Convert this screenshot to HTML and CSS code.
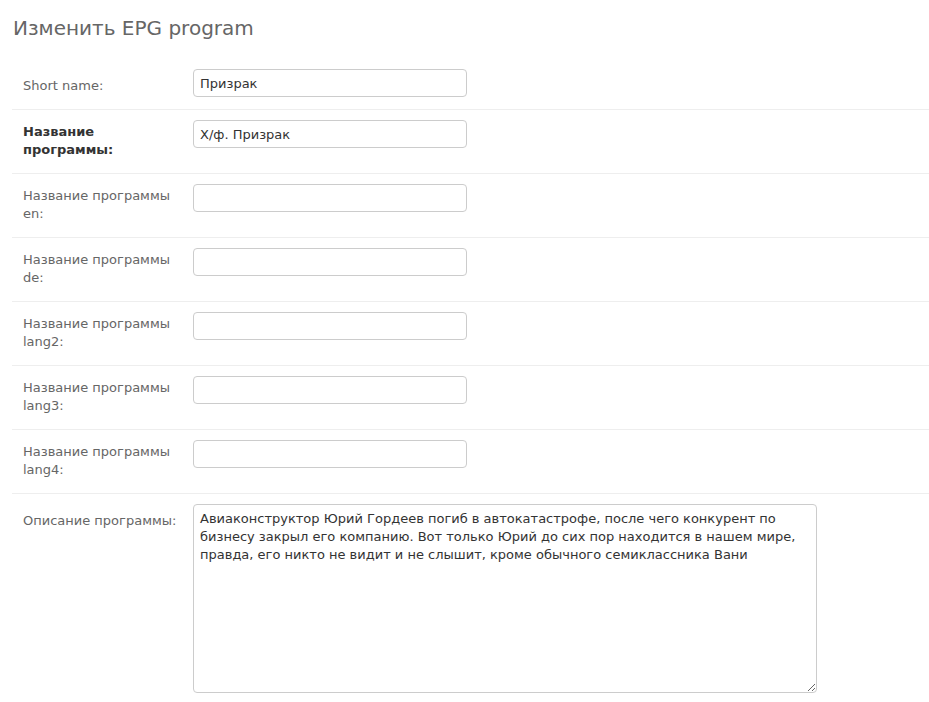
FILE: index.html
```html
<!DOCTYPE html>
<html lang="ru">
<head>
  <meta charset="UTF-8">
  <meta name="viewport" content="width=device-width, initial-scale=1.0">
  <title>Изменить EPG program</title>
  <link rel="stylesheet" href="styles.css">
</head>
<body>
  <div class="content">
    <h1>Изменить EPG program</h1>

    <form class="change-form">
      <div class="form-row row-single">
        <label for="id_short_name">Short name:</label>
        <input type="text" id="id_short_name" value="Призрак">
      </div>

      <div class="form-row">
        <label class="required" for="id_name">Название программы:</label>
        <input type="text" id="id_name" value="Х/ф. Призрак">
      </div>

      <div class="form-row">
        <label for="id_name_en">Название программы en:</label>
        <input type="text" id="id_name_en">
      </div>

      <div class="form-row">
        <label for="id_name_de">Название программы de:</label>
        <input type="text" id="id_name_de">
      </div>

      <div class="form-row">
        <label for="id_name_lang2">Название программы lang2:</label>
        <input type="text" id="id_name_lang2">
      </div>

      <div class="form-row">
        <label for="id_name_lang3">Название программы lang3:</label>
        <input type="text" id="id_name_lang3">
      </div>

      <div class="form-row">
        <label for="id_name_lang4">Название программы lang4:</label>
        <input type="text" id="id_name_lang4">
      </div>

      <div class="form-row row-text">
        <label for="id_description">Описание программы:</label>
        <textarea id="id_description">Авиаконструктор Юрий Гордеев погиб в автокатастрофе, после чего конкурент по бизнесу закрыл его компанию. Вот только Юрий до сих пор находится в нашем мире, правда, его никто не видит и не слышит, кроме обычного семиклассника Вани</textarea>
      </div>
    </form>
  </div>
</body>
</html>
```

FILE: styles.css
```css
body {
  margin: 0;
  font-family: "DejaVu Sans", Verdana, sans-serif;
  font-size: 13px;
  color: #333;
  background: #fff;
}
.content {
  padding: 0 0 0 12px;
}
h1 {
  margin: 0;
  padding: 15px 0 0 1px;
  height: 44px;
  font-size: 20px;
  font-weight: normal;
  line-height: 26px;
  color: #666;
}
.form-row {
  display: flex;
  align-items: flex-start;
  padding: 10px 0 10px 11px;
  border-bottom: 1px solid #eee;
}
.form-row label {
  flex: 0 0 170px;
  box-sizing: border-box;
  min-height: 43px;
  padding: 3px 10px 4px 0;
  line-height: 18px;
  color: #666;
}
.form-row label.required {
  font-weight: bold;
  color: #333;
}
.row-single label {
  min-height: 30px;
  padding: 8px 10px 0 0;
}
.row-text {
  border-bottom: none;
}
.row-text label {
  padding-top: 8px;
}
input[type="text"],
textarea {
  box-sizing: border-box;
  border: 1px solid #ccc;
  border-radius: 4px;
  font-family: "DejaVu Sans", Verdana, sans-serif;
  font-size: 13px;
  color: #333;
  background: #fff;
}
input[type="text"] {
  width: 274px;
  height: 28px;
  padding: 2px 6px;
}
textarea {
  width: 624px;
  height: 189px;
  padding: 5px 6px;
  line-height: 18px;
}
```
